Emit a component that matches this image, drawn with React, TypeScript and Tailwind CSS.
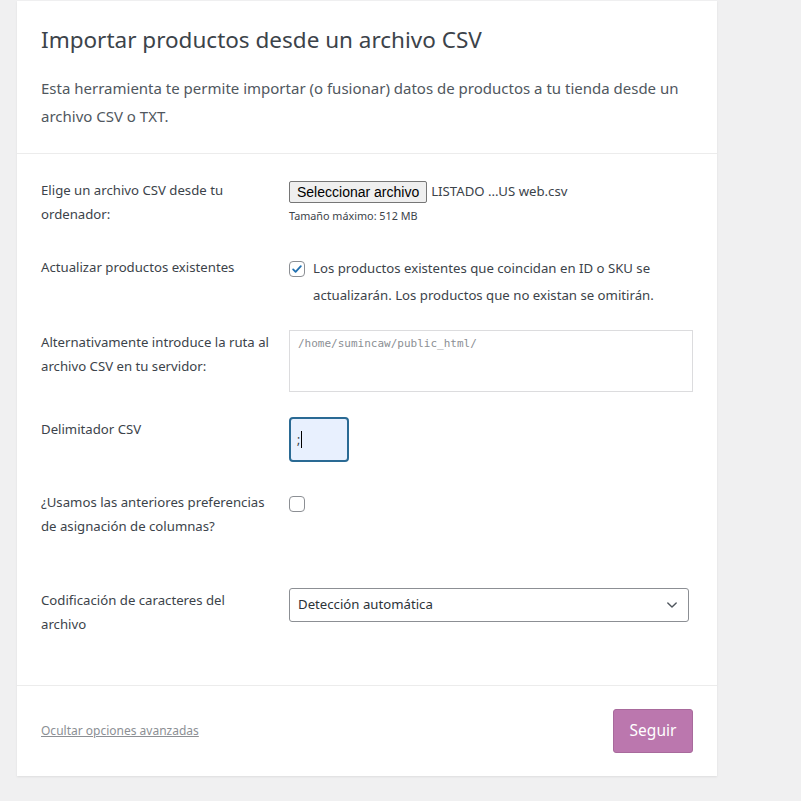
import React from "react";

const font = { fontFamily: '"Noto Sans", "Open Sans", sans-serif' };

function Checkbox({ checked }: { checked?: boolean }) {
  return (
    <span className="flex h-[16px] w-[16px] shrink-0 items-center justify-center rounded-[4px] border border-[#8c8f94] bg-white">
      {checked && (
        <svg width="14" height="14" viewBox="0 0 20 20" fill="none">
          <path d="M4.5 10.5l3.5 3.5 7.5-8" stroke="#2271b1" strokeWidth="2.6" strokeLinecap="round" strokeLinejoin="round" />
        </svg>
      )}
    </span>
  );
}

function Row({ label, children, className }: { label: React.ReactNode; children: React.ReactNode; className: string }) {
  return (
    <div className={`flex ${className}`}>
      <div className="w-[248px] shrink-0 whitespace-nowrap text-[13.2px] leading-[24px] text-[#3c434a]">{label}</div>
      <div className="flex-1 pr-[24px]">{children}</div>
    </div>
  );
}

export default function App() {
  return (
    <div className="min-h-[801px] bg-[#f0f0f1] pl-[17px] pt-px" style={font}>
      <div className="w-[700px] bg-white shadow-[0_1px_2px_rgba(0,0,0,0.08)]">
        <div className="border-b border-[#ececec] px-6 pb-[23px] pt-[23px]">
          <h1 className="text-[22.5px] leading-[32px] text-[#3c434a]">Importar productos desde un archivo CSV</h1>
          <p className="mt-[18px] text-[15px] leading-[28px] text-[#50575e]">
            Esta herramienta te permite importar (o fusionar) datos de productos a tu tienda desde un archivo CSV o TXT.
          </p>
        </div>

        <div className="border-b border-[#ececec] px-6 pt-[24px]">
          <Row label={<>Elige un archivo CSV desde tu<br />ordenador:</>} className="h-[77px]">
            <div className="flex items-center pt-[3px]">
              <button
                type="button"
                className="h-[22px] rounded-[2px] border border-[#767676] bg-[#efefef] px-[7px] text-[14px] leading-[20px] text-black"
                style={{ fontFamily: '"Liberation Sans", Arial, sans-serif' }}
              >
                Seleccionar archivo
              </button>
              <span className="ml-[4px] text-[13.2px] text-[#3c434a]">LISTADO ...US web.csv</span>
            </div>
            <div className="mt-[5px] text-[10.8px] leading-[16px] text-[#3c434a]">Tamaño máximo: 512 MB</div>
          </Row>

          <Row label="Actualizar productos existentes" className="h-[75px]">
            <div className="flex items-start text-[13.2px] leading-[27px] text-[#3c434a]">
              <span className="mt-[6px] mr-[8px]"><Checkbox checked /></span>
              <span>Los productos existentes que coincidan en ID o SKU se actualizarán. Los productos que no existan se omitirán.</span>
            </div>
          </Row>

          <Row label={<>Alternativamente introduce la ruta al<br />archivo CSV en tu servidor:</>} className="h-[87px]">
            <div
              className="h-[62px] w-[404px] border border-[#dcdcde] px-[8px] py-[4px] text-[11px] leading-[18px] text-[#8c8f94]"
              style={{ fontFamily: '"DejaVu Sans Mono", "Liberation Mono", monospace' }}
            >
              /home/sumincaw/public_html/
            </div>
          </Row>

          <Row label="Delimitador CSV" className="h-[73px]">
            <div className="flex h-[45px] w-[60px] items-center rounded-[4px] border-2 border-[#2a6a94] bg-[#e8f0fe] pl-[6px] text-[12px] text-[#2c3338]">
              <span>;</span>
              <span className="ml-px h-[17px] w-px bg-black" />
            </div>
          </Row>

          <Row label={<>¿Usamos las anteriores preferencias<br />de asignación de columnas?</>} className="h-[98px]">
            <div className="pt-[6px]">
              <Checkbox />
            </div>
          </Row>

          <Row label={<>Codificación de caracteres del<br />archivo</>} className="h-[97px]">
            <div className="flex h-[34px] w-[400px] items-center justify-between rounded-[3px] border border-[#8c8f94] pl-[8px] pr-[9px] text-[13.2px] text-[#2c3338]">
              <span>Detección automática</span>
              <svg width="14" height="14" viewBox="0 0 20 20" fill="none">
                <path d="M4 7l6 6 6-6" stroke="#50575e" strokeWidth="2" strokeLinecap="round" strokeLinejoin="round" />
              </svg>
            </div>
          </Row>
        </div>

        <div className="flex items-center justify-between py-[23px] pl-6 pr-[24px]">
          <a href="#" className="text-[12px] text-[#8c8f94] underline">Ocultar opciones avanzadas</a>
          <button
            type="button"
            className="h-[44px] w-[80px] rounded-[3px] border border-[#a86a9c] bg-[#bb77ae] text-[15.5px] text-white"
          >
            Seguir
          </button>
        </div>
      </div>
    </div>
  );
}
